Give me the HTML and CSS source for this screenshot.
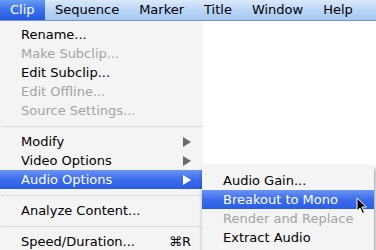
FILE: index.html
```html
<!DOCTYPE html>
<html lang="en">
<head>
  <meta charset="UTF-8">
  <title>Clip menu</title>
  <link rel="stylesheet" href="styles.css">
</head>
<body>

  <div class="menubar">
    <span class="bar-item open">Clip</span>
    <span class="bar-item">Sequence</span>
    <span class="bar-item">Marker</span>
    <span class="bar-item">Title</span>
    <span class="bar-item">Window</span>
    <span class="bar-item">Help</span>
  </div>

  <div class="menu main-menu">
    <div class="item">Rename...</div>
    <div class="item disabled">Make Subclip...</div>
    <div class="item">Edit Subclip...</div>
    <div class="item disabled">Edit Offline...</div>
    <div class="item disabled">Source Settings...</div>
    <div class="sep"></div>
    <div class="item">Modify <span class="arrow"></span></div>
    <div class="item">Video Options <span class="arrow"></span></div>
    <div class="item selected">Audio Options <span class="arrow"></span></div>
    <div class="sep"></div>
    <div class="item">Analyze Content...</div>
    <div class="sep"></div>
    <div class="item">Speed/Duration... <span class="key">&#8984;R</span></div>
  </div>

  <div class="menu sub-menu">
    <div class="item">Audio Gain...</div>
    <div class="item selected">Breakout to Mono</div>
    <div class="item disabled">Render and Replace</div>
    <div class="item">Extract Audio</div>
  </div>

  <svg class="cursor" width="12" height="18" viewBox="0 0 12 18">
    <path d="M1 1 L1 14 L4 11 L6.5 16.5 L8.5 15.5 L6 10 L10.5 10 Z" fill="#000" stroke="#fff" stroke-width="1" stroke-linejoin="round"/>
  </svg>

</body>
</html>
```

FILE: styles.css
```css
html, body {
  margin: 0;
  padding: 0;
}

body {
  width: 376px;
  height: 250px;
  overflow: hidden;
  position: relative;
  background: #ffffff;
  font-family: 'DejaVu Sans', sans-serif;
  font-size: 13px;
  color: #000;
}

.menubar {
  display: flex;
  height: 21px;
  background: linear-gradient(#dbe9fb, #b7d3f5 55%, #a6c8f1);
  border-bottom: 1px solid #6f95cf;
  box-sizing: border-box;
}

.bar-item {
  padding: 0 10px;
  line-height: 20px;
  margin-right: 0;
}

.bar-item + .bar-item {
  margin-left: 0;
}

.bar-item.open {
  color: #fff;
  padding: 0 10px 0 10px;
  width: 25px;
  background: linear-gradient(#6a9af3, #3a70ea 50%, #2458e2);
}

.bar-item:nth-child(2) { margin-left: 0; }

.menu {
  background: #f4f4f4;
  box-sizing: border-box;
}

.main-menu {
  width: 203px;
  padding: 4px 0 0;
}

.sub-menu {
  position: absolute;
  left: 202px;
  top: 166px;
  width: 172px;
  padding: 5px 0 4px;
  box-shadow: 1px 2px 4px rgba(0, 0, 0, 0.45);
}

.item {
  display: flex;
  align-items: center;
  justify-content: space-between;
  height: 19px;
  padding: 0 12px 0 21px;
  white-space: nowrap;
}

.sub-menu .item {
  padding-left: 21px;
}

.item.disabled {
  color: #a3a3a3;
}

.item.selected {
  color: #fff;
  background: linear-gradient(#6b95f2, #3c6cec 50%, #2a5ce4);
}

.sep {
  height: 12px;
  position: relative;
}

.sep::after {
  content: "";
  position: absolute;
  left: 1px;
  right: 0;
  top: 6px;
  border-top: 1px solid #dadada;
}

.arrow {
  width: 0;
  height: 0;
  border-top: 5px solid transparent;
  border-bottom: 5px solid transparent;
  border-left: 8px solid #6a6a6a;
}

.selected .arrow {
  border-left-color: #fff;
}

.key {
  font-size: 13px;
}

.cursor {
  position: absolute;
  left: 356px;
  top: 197px;
}
```
